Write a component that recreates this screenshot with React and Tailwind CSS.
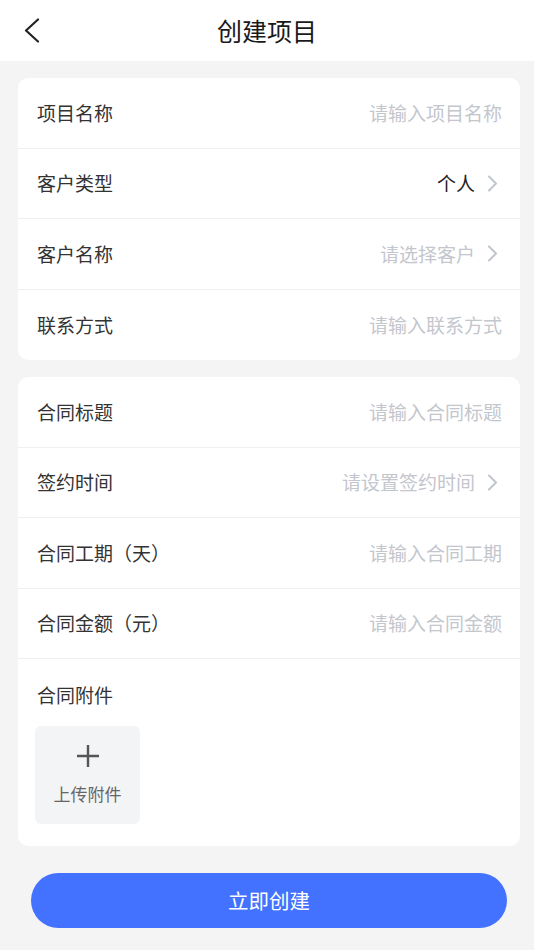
import React from 'react';

const font = { fontFamily: '"Noto Sans CJK SC", "Noto Sans", sans-serif' };

function Chevron() {
  return (
    <svg className="w-[10px] h-[17px] ml-[12px] mr-[5px]" viewBox="0 0 10 17" fill="none" stroke="#c0c4cc" strokeWidth={2} strokeLinecap="round" strokeLinejoin="round">
      <path d="M2 1.5l7 7-7 7" />
    </svg>
  );
}

function Row({ label, value, placeholder, arrow, last }) {
  return (
    <div className={`h-[70.5px] flex items-center justify-between pl-[19px] pr-[18px] ${last ? '' : 'border-b border-[#eeeff2]'}`}>
      <span className="text-[19px] text-[#333333]">{label}</span>
      <div className="flex items-center">
        {value ? (
          <span className="text-[19px] text-[#222222]">{value}</span>
        ) : (
          <span className="text-[19px] text-[#c3c6cd]">{placeholder}</span>
        )}
        {arrow && <Chevron />}
      </div>
    </div>
  );
}

export default function App() {
  return (
    <div className="min-h-[950px] bg-[#f4f4f5] flex flex-col" style={font}>
      {/* Header */}
      <div className="h-[61px] bg-white flex items-center justify-center relative">
        <svg className="absolute left-[23px] top-[18px] w-[17px] h-[25px]" viewBox="0 0 17 25" fill="none" stroke="#222" strokeWidth={2.2} strokeLinecap="round" strokeLinejoin="round">
          <path d="M15 1.5L3 12.5l12 11" />
        </svg>
        <span className="text-[25px] text-[#1a1a1a]">创建项目</span>
      </div>

      <div className="pl-[18px] pr-[14px] pt-[17px] flex flex-col gap-[17px]">
        <div className="bg-white rounded-[10px]">
          <Row label="项目名称" placeholder="请输入项目名称" />
          <Row label="客户类型" value="个人" arrow />
          <Row label="客户名称" placeholder="请选择客户" arrow />
          <Row label="联系方式" placeholder="请输入联系方式" last />
        </div>

        <div className="bg-white rounded-[10px]">
          <Row label="合同标题" placeholder="请输入合同标题" />
          <Row label="签约时间" placeholder="请设置签约时间" arrow />
          <Row label="合同工期（天）" placeholder="请输入合同工期" />
          <Row label="合同金额（元）" placeholder="请输入合同金额" />
          <div className="pl-[19px] pr-[18px] pt-[22px] pb-[22px]">
            <span className="text-[19px] text-[#333333] leading-[28px] block">合同附件</span>
            <div className="mt-[17px] ml-[-2px] w-[105px] h-[98px] rounded-[6px] bg-[#f3f4f6] flex flex-col items-center justify-center">
              <svg className="w-[24px] h-[24px]" viewBox="0 0 24 24" fill="none" stroke="#555" strokeWidth={2.4}>
                <path d="M12 1v22M1 12h22" />
              </svg>
              <span className="mt-[14px] text-[17px] leading-[24px] text-[#666666]">上传附件</span>
            </div>
          </div>
        </div>
      </div>

      <div className="pl-[31px] pr-[27px] pt-[27px]">
        <button className="w-full h-[55px] rounded-full bg-[#4272ff] text-white text-[20.5px]">立即创建</button>
      </div>
    </div>
  );
}
